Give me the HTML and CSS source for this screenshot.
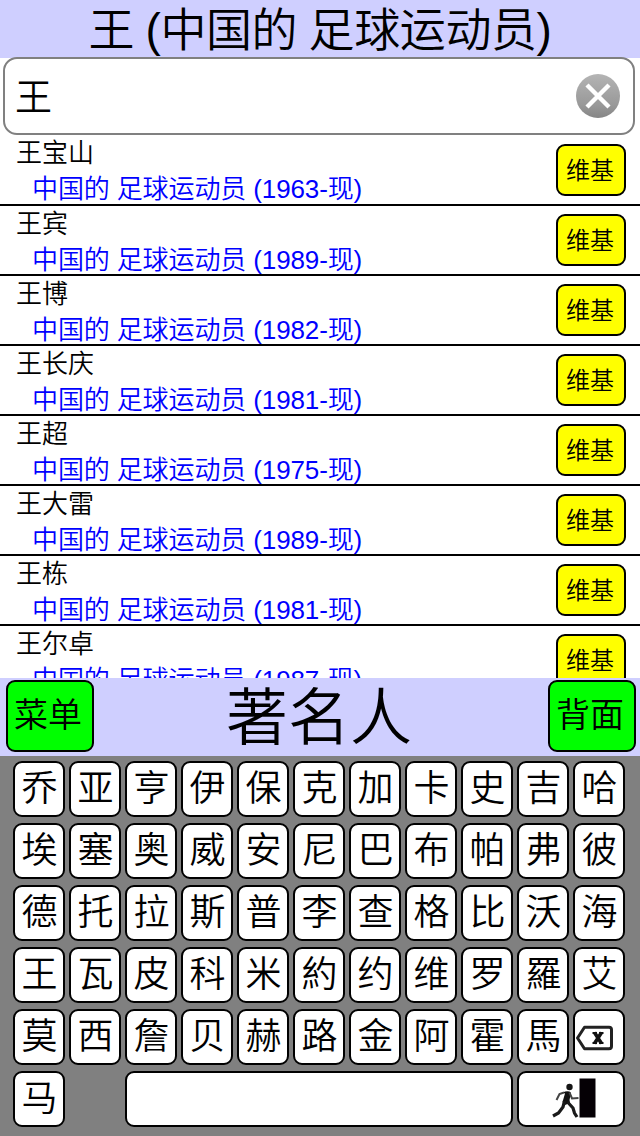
FILE: index.html
```html
<!DOCTYPE html>
<html lang="zh-CN">
<head>
    <meta charset="UTF-8">
    <meta name="viewport" content="width=device-width, initial-scale=1.0">
    <title>著名人</title>
    <link rel="stylesheet" href="styles.css">
</head>
<body>
    <div class="app">
        <h1 class="header">王 (中国的 足球运动员)</h1>

        <div class="search">
            <span class="search-text">王</span>
            <button class="search-clear">
                <svg width="46" height="46" viewBox="0 0 46 46">
                    <defs>
                        <linearGradient id="clearFill" x1="0" y1="0" x2="0" y2="1">
                            <stop offset="0" stop-color="#b4b4b4"/>
                            <stop offset="0.7" stop-color="#999"/>
                            <stop offset="1" stop-color="#858585"/>
                        </linearGradient>
                    </defs>
                    <circle cx="23" cy="23" r="22" fill="url(#clearFill)"/>
                    <path d="M12 12L34 34M34 12L12 34" stroke="#fff" stroke-width="4.4"/>
                </svg>
            </button>
        </div>

        <div class="results" id="results"></div>

        <div class="toolbar">
            <button class="nav-button">菜单</button>
            <div class="title">著名人</div>
            <button class="nav-button">背面</button>
        </div>

        <div class="keyboard" id="keyboard"></div>
    </div>

    <template id="deleteIcon">
        <svg class="icon-delete" width="40" height="28" viewBox="0 0 40 28">
            <path d="M2.5 14L9.5 3.2H34Q36.5 3.2 36.5 5.7V22.3Q36.5 24.8 34 24.8H9.5Z" fill="#fff" stroke="#222" stroke-width="3" stroke-linejoin="round"/>
            <path d="M17.500 9H22M24 9H28.500M17.500 19H22M24 19H28.500" stroke="#111" stroke-width="2"/>
            <path d="M19.5 8.500L26.5 19.500M26.5 8.500L19.5 19.500" stroke="#111" stroke-width="3.6"/>
        </svg>
    </template>
    <template id="exitIcon">
        <svg class="icon-exit" width="46" height="42" viewBox="0 0 46 42">
            <path d="M28.5 1.5h16v39h-16z" fill="#050005"/>
            <circle cx="18.5" cy="10" r="3.2" fill="#151515"/>
            <path d="M12 15.5Q15 13.500 18.5 14.5L20 16L18.5 23L19 26L14 28L11.5 25L14 16.5Z" fill="#111"/>
            <path d="M13 15.5L8.5 17L5.5 23M18.5 15.5L21 21.5L27.5 21" fill="none" stroke="#444" stroke-width="2"/>
            <path d="M13.5 24L12 30L7.5 36L2 39M16.5 25L22 31L23.5 36L26 40" fill="none" stroke="#1a1a1a" stroke-width="3.2"/>
        </svg>
    </template>

    <script>
        const people = [
            ['王宝山', 1963], ['王宾', 1989], ['王博', 1982], ['王长庆', 1981],
            ['王超', 1975], ['王大雷', 1989], ['王栋', 1981], ['王尔卓', 1987]
        ];
        const keys = '乔亚亨伊保克加卡史吉哈埃塞奥威安尼巴布帕弗彼德托拉斯普李查格比沃海王瓦皮科米約约维罗羅艾莫西詹贝赫路金阿霍馬';

        document.getElementById('results').innerHTML = people.map(([name, year]) => `
            <div class="result">
                <div class="person">
                    <div class="name">${name}</div>
                    <div class="detail">中国的 足球运动员 (${year}-现)</div>
                </div>
                <button class="wiki">维基</button>
            </div>`).join('');

        const icon = id => document.getElementById(id).innerHTML;
        const key = (label, extra = '') => `<button class="key ${extra}">${label}</button>`;

        document.getElementById('keyboard').innerHTML =
            [...keys].map(k => key(k)).join('') +
            key(icon('deleteIcon'), 'key-delete') +
            key('马') +
            key('', 'key-space') +
            key(icon('exitIcon'), 'key-exit');
    </script>
</body>
</html>
```
FILE: styles.css
```css
* {
    box-sizing: border-box;
}
body {
    margin: 0;
    background: #fff;
    color: #000;
    font-family: "Liberation Sans", "Noto Sans CJK SC", sans-serif;
    font-weight: 350;
}
button {
    padding: 0;
    font: inherit;
    color: inherit;
    cursor: pointer;
}
.app {
    display: flex;
    flex-direction: column;
    width: 640px;
    height: 1136px;
    overflow: hidden;
}
.header {
    height: 58px;
    flex: none;
    margin: 0;
    background: #cfcfff;
    font-size: 46px;
    font-weight: inherit;
    line-height: 61px;
    letter-spacing: -0.4px;
    word-spacing: -1px;
    text-align: center;
    white-space: nowrap;
}
.search {
    display: flex;
    flex: none;
    align-items: center;
    justify-content: space-between;
    height: 78px;
    margin: -1px 5px 0 3px;
    padding: 0 12px 0 10px;
    background: #fff;
    border: 2px solid #808080;
    border-radius: 14px;
}
.search-text {
    padding-top: 6px;
    font-size: 37px;
    line-height: 68px;
}
.search-clear {
    width: 46px;
    height: 46px;
    background: none;
    border: none;
}
.search-clear svg {
    display: block;
}
.results {
    height: 543px;
    flex: none;
    overflow: hidden;
}
.result {
    display: flex;
    justify-content: space-between;
    height: 70px;
    padding: 0 14px 0 16px;
    border-bottom: 2px solid #000;
}
.result:first-child {
    height: 71px;
    padding-top: 1px;
}
.name,
.detail {
    height: 36px;
    font-size: 26px;
    line-height: 36px;
    white-space: nowrap;
}
.result:first-child .person {
    margin-top: -1px;
}
.detail {
    padding-left: 16px;
    color: #00f;
    letter-spacing: -0.12px;
}
.wiki {
    width: 70px;
    height: 52px;
    margin-top: 8px;
    padding: 0 2px 3px 0;
    background: #ff0;
    border: 2px solid #000;
    border-radius: 9px;
    font-size: 24px;
}
.toolbar {
    position: relative;
    display: flex;
    flex: none;
    justify-content: space-between;
    height: 78px;
    padding: 2px 4px 0 6px;
    background: #cfcfff;
}
.nav-button {
    width: 88px;
    height: 72px;
    padding: 0 4px 8px 0;
    background: #0f0;
    border: 2px solid #000;
    border-radius: 9px;
    font-size: 34px;
}
.title {
    padding-right: 4px;
    font-size: 62px;
    line-height: 78px;
}
.keyboard {
    display: grid;
    grid-template-columns: repeat(11, 52px);
    grid-auto-rows: 56px;
    gap: 6px 4px;
    flex: 1;
    padding: 5px 0 0 13px;
    background: #808080;
}
.key {
    display: flex;
    align-items: center;
    justify-content: center;
    padding: 0 0 1px 1px;
    background: #fff;
    border: 2px solid #000;
    border-radius: 9px;
    font-size: 36px;
    line-height: 48px;
}
.key-delete {
    justify-content: flex-start;
    padding: 1px 0 0;
}
.key-space {
    grid-column: 3 / 10;
}
.key-exit {
    grid-column: 10 / 12;
    padding: 0 0 2px 5px;
}
```
